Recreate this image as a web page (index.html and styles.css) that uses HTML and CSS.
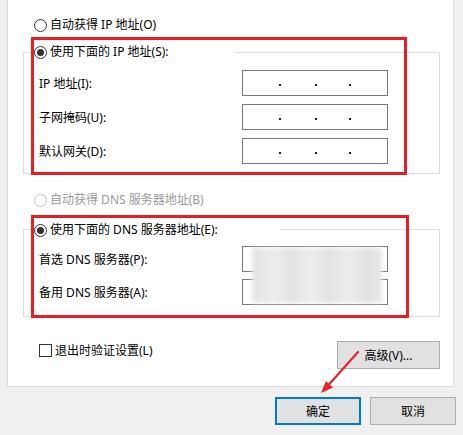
FILE: index.html
```html
<!DOCTYPE html>
<html lang="zh-CN">
<head>
<meta charset="utf-8">
<title>IPv4 属性</title>
<link rel="stylesheet" href="styles.css">
</head>
<body>
<div class="panel">
  <div class="opt">
    <span class="radio"></span>
    <span class="opt-text">自动获得 IP 地址(O)</span>
  </div>

  <div class="group group-ip">
    <div class="legend legend-ip">
      <span class="radio checked"></span>
      <span class="opt-text">使用下面的 IP 地址(S):</span>
    </div>
    <div class="field">
      <span class="label">IP 地址(I):</span>
      <span class="ipbox"><i class="dot d1"></i><i class="dot d2"></i><i class="dot d3"></i></span>
    </div>
    <div class="field">
      <span class="label">子网掩码(U):</span>
      <span class="ipbox"><i class="dot d1"></i><i class="dot d2"></i><i class="dot d3"></i></span>
    </div>
    <div class="field">
      <span class="label">默认网关(D):</span>
      <span class="ipbox"><i class="dot d1"></i><i class="dot d2"></i><i class="dot d3"></i></span>
    </div>
  </div>

  <div class="opt opt-dns disabled">
    <span class="radio"></span>
    <span class="opt-text">自动获得 DNS 服务器地址(B)</span>
  </div>

  <div class="group group-dns">
    <div class="legend legend-dns">
      <span class="radio checked"></span>
      <span class="opt-text">使用下面的 DNS 服务器地址(E):</span>
    </div>
    <div class="field field-dns first">
      <span class="label">首选 DNS 服务器(P):</span>
      <span class="ipbox"></span>
    </div>
    <div class="field field-dns">
      <span class="label">备用 DNS 服务器(A):</span>
      <span class="ipbox"></span>
    </div>
  </div>

  <div class="bottom-row">
    <label class="check">
      <span class="box"></span>
      <span class="check-text">退出时验证设置(L)</span>
    </label>
    <button class="btn btn-adv">高级(V)...</button>
  </div>
</div>

<div class="footer">
  <button class="btn btn-foot btn-ok">确定</button>
  <button class="btn btn-foot">取消</button>
</div>

<div class="blur"></div>
<div class="mark mark-ip"></div>
<div class="mark mark-dns"></div>
<svg class="arrow" width="50" height="60" viewBox="0 0 50 60">
  <line x1="43" y1="12" x2="13.5" y2="45" stroke="#e8232a" stroke-width="2.2" stroke-linecap="round"/>
  <polygon points="6,53 18,47.5 11,41" fill="#e8232a"/>
</svg>
</body>
</html>
```

FILE: styles.css
```css
* { box-sizing: border-box; }

html, body {
  margin: 0;
  padding: 0;
}

body {
  width: 463px;
  height: 435px;
  overflow: hidden;
  position: relative;
  background: #f0f0f0;
  font-family: "Noto Sans", "Noto Sans CJK SC", sans-serif;
  font-size: 12px;
  color: #000;
}

.panel {
  margin-left: 7px;
  width: 447px;
  height: 387px;
  background: #fff;
  border: 1px solid #dadada;
  border-top: none;
  padding: 15px 13px 17px 15px;
}

.opt {
  display: flex;
  height: 20px;
  margin-left: 11px;
}

.opt-text {
  line-height: 20px;
  margin-left: 3px;
  white-space: nowrap;
}

.radio {
  flex: none;
  width: 13px;
  height: 13px;
  margin-top: 4px;
  border: 1px solid #333;
  border-radius: 50%;
  background: #fff;
  display: flex;
  align-items: center;
  justify-content: center;
}

.radio.checked::after {
  content: "";
  width: 7px;
  height: 7px;
  border-radius: 50%;
  background: #333;
}

.disabled .radio { border-color: #c4c4c4; }
.disabled .opt-text { color: #9a9a9a; }

.group {
  border: 1px solid #dcdcdc;
  margin-top: 17px;
  padding-bottom: 9px;
}

.legend {
  display: flex;
  height: 20px;
  margin-top: -11px;
  margin-left: 9px;
  padding-left: 1px;
  background: #fff;
}

.legend-ip { width: 203px; }
.legend-dns { width: 247px; margin-top: -10px; }

.field {
  display: flex;
  align-items: center;
  height: 26px;
  margin-top: 8px;
  padding-left: 15px;
}

.label {
  width: 203px;
  white-space: nowrap;
}

.ipbox {
  width: 146px;
  height: 26px;
  border: 1px solid #7a7a7a;
  display: flex;
  align-items: center;
  padding-left: 36px;
}

.dot {
  width: 2px;
  height: 2px;
  background: #222;
  margin-top: 4px;
}
.dot.d2 { margin-left: 34px; }
.dot.d3 { margin-left: 32px; }

.opt-dns { margin-top: 16px; }

.group-dns {
  margin-top: 19px;
  padding-bottom: 11px;
}

.field-dns { margin-top: 7px; }
.field-dns.first { margin-top: 6px; }

.bottom-row {
  display: flex;
  justify-content: space-between;
  align-items: flex-start;
  margin-top: 24px;
}

.check {
  display: flex;
  align-items: center;
  height: 13px;
  margin-top: 3px;
  margin-left: 16px;
}

.box {
  width: 13px;
  height: 13px;
  border: 1px solid #333;
  background: #fff;
}

.check-text {
  margin-left: 3px;
  line-height: 13px;
  white-space: nowrap;
}

.btn {
  font-family: "Noto Sans", "Noto Sans CJK SC", sans-serif;
  font-size: 12px;
  color: #000;
  background: #e1e1e1;
  border: 1px solid #adadad;
  padding: 0;
  height: 28px;
}

.btn-adv { width: 103px; }

.footer {
  display: flex;
  justify-content: flex-end;
  gap: 9px;
  margin-top: 10px;
  padding-right: 7px;
}

.btn-foot { width: 86px; }

.btn-ok {
  border: 2px solid #0078d7;
}

.blur {
  position: absolute;
  left: 252px;
  top: 248px;
  width: 130px;
  height: 55px;
  background:
    linear-gradient(90deg, #e4e4e4 0%, #ececec 18%, #e2e2e2 30%, #ededed 45%, #e3e3e3 60%, #ececec 74%, #e2e2e2 88%, #e8e8e8 100%);
  filter: blur(2px);
}

.mark {
  position: absolute;
  border: 3px solid #ec1c24;
}

.mark-ip {
  left: 31px;
  top: 37px;
  width: 376px;
  height: 138px;
}

.mark-dns {
  left: 31px;
  top: 215px;
  width: 378px;
  height: 103px;
}

.arrow {
  position: absolute;
  left: 315px;
  top: 340px;
}
```
